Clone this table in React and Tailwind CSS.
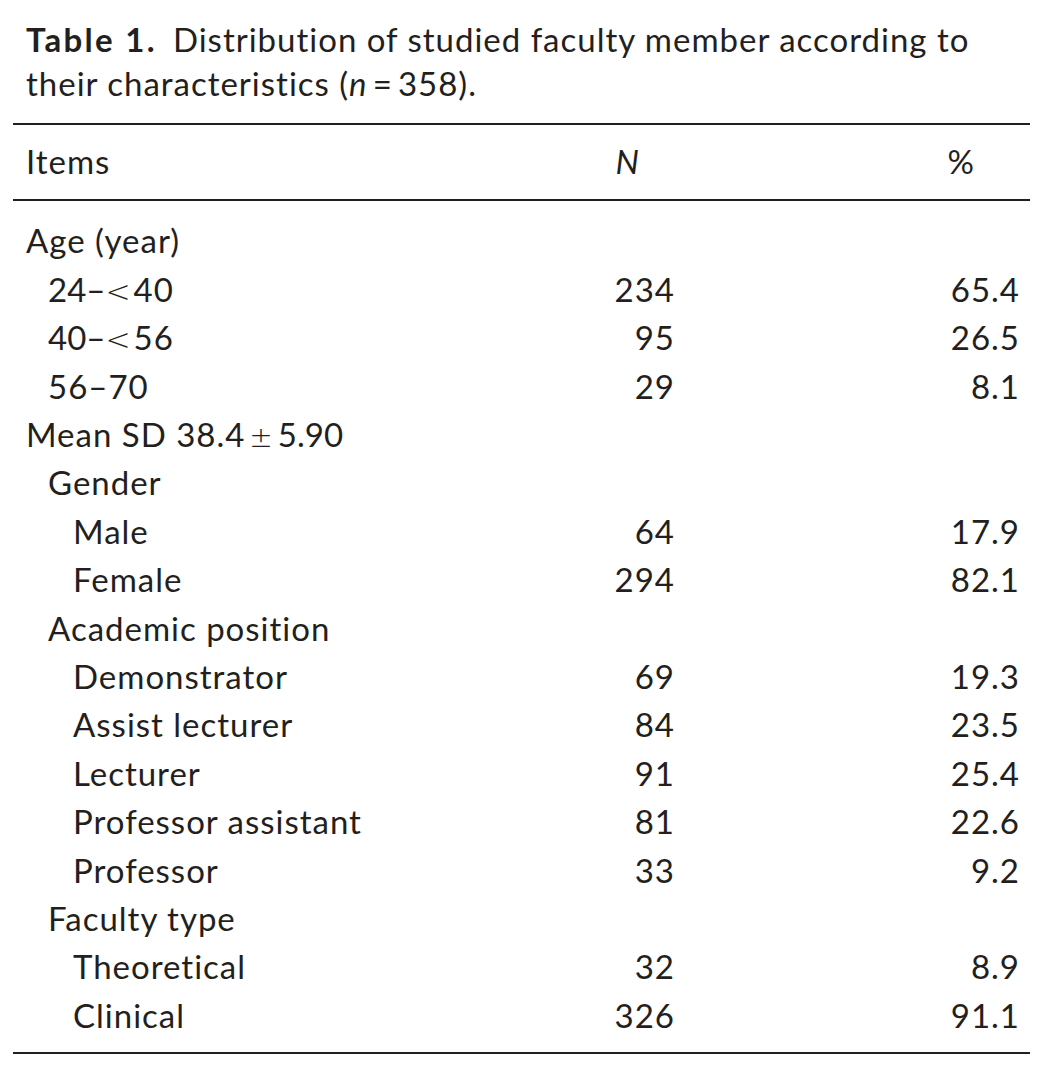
export default function App() {
  const rows = [
    { label: 'Age (year)', level: 0 },
    { label: ['24–', '40'], n: '234', p: '65.4', level: 1 },
    { label: ['40–', '56'], n: '95', p: '26.5', level: 1 },
    { label: '56–70', n: '29', p: '8.1', level: 1 },
    { label: 'mean', level: 0 },
    { label: 'Gender', level: 1 },
    { label: 'Male', n: '64', p: '17.9', level: 2 },
    { label: 'Female', n: '294', p: '82.1', level: 2 },
    { label: 'Academic position', level: 1 },
    { label: 'Demonstrator', n: '69', p: '19.3', level: 2 },
    { label: 'Assist lecturer', n: '84', p: '23.5', level: 2 },
    { label: 'Lecturer', n: '91', p: '25.4', level: 2 },
    { label: 'Professor assistant', n: '81', p: '22.6', level: 2 },
    { label: 'Professor', n: '33', p: '9.2', level: 2 },
    { label: 'Faculty type', level: 1 },
    { label: 'Theoretical', n: '32', p: '8.9', level: 2 },
    { label: 'Clinical', n: '326', p: '91.1', level: 2 },
  ];

  const indent = ['pl-[13px]', 'pl-[35px]', 'pl-[60px]'];

  const renderLabel = (label) => {
    if (Array.isArray(label)) {
      return (
        <>
          <span className="tracking-normal">{label[0]}</span>
          <span className="font-['DejaVu_Sans',sans-serif] font-extralight text-[30px] mr-[2px]">&lt;</span>
          {label[1]}
        </>
      );
    }
    if (label === 'mean') {
      return (
        <>
          Mean SD 38.4<span className="font-['DejaVu_Sans',sans-serif] font-extralight text-[28px] mx-[4px]">±</span>
          <span className="tracking-normal">5.90</span>
        </>
      );
    }
    return label;
  };

  return (
    <div className="w-[1056px] h-[1079px] bg-white text-[#231f20] font-['Lato',sans-serif]">
      <div className="pl-[13px] pr-[26px] pt-[17px]">
        <p className="pl-[13px] text-[33px] leading-[44px] tracking-[0.03em]">
          <span className="font-bold tracking-[0.07em]">Table 1.</span>
          <span className="ml-[16px]">Distribution of studied faculty member according to</span>
          <br />
          their characteristics (<i>n</i>{'\u2009'}={'\u2009'}358).
        </p>

        <div className="mt-[18px] border-t-2 border-[#231f20]" />
        <div className="flex h-[74px] items-center text-[33px] tracking-[0.03em]">
          <div className="w-[462px] pl-[13px]">Items</div>
          <div className="w-[200px] pr-[35px] text-right italic">N</div>
          <div className="w-[345px] pr-[45px] text-right">%</div>
        </div>
        <div className="border-t-2 border-[#231f20]" />

        <div className="pt-[16px] pb-[12px] text-[33px] tracking-[0.03em]">
          {rows.map((r, i) => (
            <div key={i} className="flex h-[48.4px] items-center">
              <div className={`w-[462px] ${indent[r.level]}`}>{renderLabel(r.label)}</div>
              <div className="w-[200px] text-right">{r.n}</div>
              <div className="w-[345px] text-right">{r.p}</div>
            </div>
          ))}
        </div>
        <div className="border-t-2 border-[#231f20]" />
      </div>
    </div>
  );
}
